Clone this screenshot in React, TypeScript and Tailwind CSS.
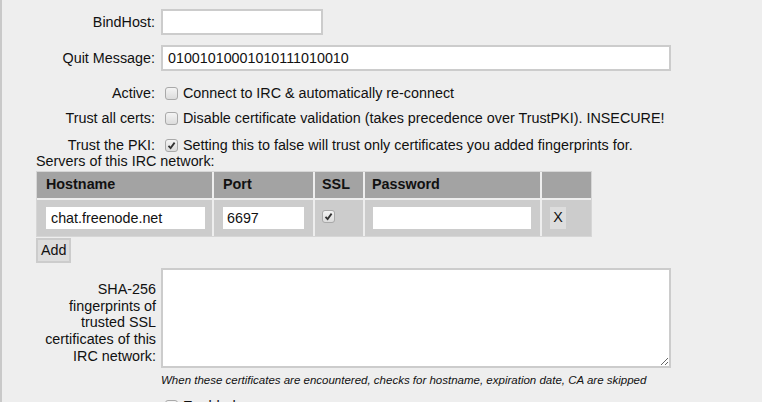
import type { ReactNode } from 'react';

function Box({ checked = false }: { checked?: boolean }) {
  return (
    <span className="ml-[4px] mr-[5px] inline-flex h-[13px] w-[13px] shrink-0 items-center justify-center rounded-[3px] border border-[#a9a9a9] bg-gradient-to-b from-[#f4f4f4] to-[#dcdcdc]">
      {checked && (
        <svg width="9" height="9" viewBox="0 0 9 9">
          <path d="M1.5 4.8 L3.6 7 L7.6 1.6" fill="none" stroke="#333" strokeWidth="1.8" />
        </svg>
      )}
    </span>
  );
}

function Row({ label, children, className = '' }: { label: ReactNode; children: ReactNode; className?: string }) {
  return (
    <div className={`flex items-center leading-[17px] ${className}`}>
      <div className="w-[120px] shrink-0 pr-[1px] text-right">{label}</div>
      <div className="ml-[5px] flex min-w-0 flex-1 items-center">{children}</div>
    </div>
  );
}

const input = 'h-[26px] border-2 border-[#cccccc] bg-white px-[5px] text-[14.3px] text-[#111] outline-none';

export default function App() {
  return (
    <div className="h-[402px] w-[762px] overflow-hidden bg-[#eeeeee] font-['Liberation_Sans',Arial,sans-serif] text-[14.35px] text-[#111]">
      <div className="h-full border-l-2 border-[#c9c9c9] pl-[34px] pt-[9px]">
        <Row label="BindHost:">
          <input className={`${input} w-[162px]`} defaultValue="" />
        </Row>
        <Row label="Quit Message:" className="mt-[10px]">
          <input className={`${input} w-[510px]`} defaultValue="01001010001010111010010" />
        </Row>
        <Row label="Active:" className="mt-[14px]">
          <Box />
          <span>Connect to IRC &amp; automatically re-connect</span>
        </Row>
        <Row label="Trust all certs:" className="mt-[8px]">
          <Box />
          <span>Disable certificate validation (takes precedence over TrustPKI). INSECURE!</span>
        </Row>
        <Row label="Trust the PKI:" className="mt-[10px]">
          <Box checked />
          <span>Setting this to false will trust only certificates you added fingerprints for.</span>
        </Row>
        <div className="-mt-[1px] leading-[17px]">Servers of this IRC network:</div>
        <table className="mt-[1px] w-[556px] border-separate border-spacing-0 border border-[#d6d6d6]">
          <thead>
            <tr className="h-[28px] bg-[#a3a3a3] text-left font-bold">
              <th className="w-[177px] border-r-2 border-b-2 border-[#eeeeee] pl-[9px]">Hostname</th>
              <th className="w-[101px] border-r-2 border-b-2 border-[#eeeeee] pl-[9px]">Port</th>
              <th className="w-[50px] border-r-2 border-b-2 border-[#eeeeee] pl-[7px]">SSL</th>
              <th className="w-[177px] border-r-2 border-b-2 border-[#eeeeee] pl-[7px]">Password</th>
              <th className="border-b-2 border-[#eeeeee]" />
            </tr>
          </thead>
          <tbody>
            <tr className="h-[36px] bg-[#cccccc]">
              <td className="border-r-2 border-[#eeeeee] pl-[9px]">
                <input className="h-[22px] w-[159px] bg-white px-[5px] text-[14.3px] outline-none" defaultValue="chat.freenode.net" />
              </td>
              <td className="border-r-2 border-[#eeeeee] pl-[9px]">
                <input className="h-[22px] w-[81px] bg-white px-[4px] text-[14.3px] outline-none" defaultValue="6697" />
              </td>
              <td className="border-r-2 border-[#eeeeee] pl-[3px]">
                <div className="-mt-[4px] flex">
                  <Box checked />
                </div>
              </td>
              <td className="border-r-2 border-[#eeeeee] pl-[8px]">
                <input className="h-[22px] w-[158px] bg-white px-[5px] text-[14.3px] outline-none" defaultValue="" />
              </td>
              <td className="pl-[8px]">
                <button type="button" className="h-[22px] w-[16px] bg-[#dddddd] text-center text-[14.3px]">
                  X
                </button>
              </td>
            </tr>
          </tbody>
        </table>
        <button type="button" className="mt-[1px] block h-[25px] border-2 border-[#cccccc] bg-[#dddddd] px-[3px] text-[14.3px] leading-none">
          Add
        </button>
        <div className="mt-[5px] flex">
          <div className="w-[120px] shrink-0 pt-[13px] text-right leading-[16.7px]">
            SHA-256 fingerprints of trusted SSL certificates of this IRC network:
          </div>
          <div className="ml-[5px]">
            <textarea className="block h-[100px] w-[510px] resize border-2 border-[#cccccc] bg-white outline-none" />
            <div className="mt-[4px] text-[11.5px] italic leading-[16px]">
              When these certificates are encountered, checks for hostname, expiration date, CA are skipped
            </div>
            <div className="mt-[10px] flex items-center leading-[17px]">
              <Box />
              <span>Enabled</span>
            </div>
          </div>
        </div>
      </div>
    </div>
  );
}
